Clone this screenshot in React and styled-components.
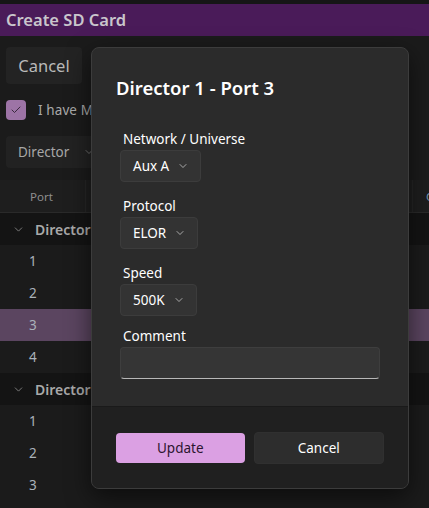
import React from 'react'
import styled, { createGlobalStyle } from 'styled-components'
import { ChevronDown, Check } from 'lucide-react'

const GlobalStyle = createGlobalStyle`
  html, body {
    margin: 0;
    padding: 0;
    background: #1b1b1b;
    font-family: 'Noto Sans', 'Open Sans', sans-serif;
    overflow: hidden;
  }
  * { box-sizing: border-box; }
`

const rows = [
  { type: 'group', label: 'Director 1' },
  { type: 'port', label: '1' },
  { type: 'port', label: '2' },
  { type: 'port', label: '3', selected: true },
  { type: 'port', label: '4' },
  { type: 'group', label: 'Director 2' },
  { type: 'port', label: '1' },
  { type: 'port', label: '2' },
  { type: 'port', label: '3' },
]

const fields = [
  { label: 'Network / Universe', value: 'Aux A' },
  { label: 'Protocol', value: 'ELOR' },
  { label: 'Speed', value: '500K' },
]

const App = () => {
  return (
    <Page>
      <GlobalStyle />
      <TopStrip />
      <TitleBar>Create SD Card</TitleBar>
      <Toolbar>
        <GhostButton>Cancel</GhostButton>
      </Toolbar>
      <CheckRow>
        <CheckBox><Check size={12} strokeWidth={2} /></CheckBox>
        <CheckText>I have Made sure the SD card is inserted and I am using</CheckText>
      </CheckRow>
      <FilterRow>
        <FilterSelect>Director <ChevronDown size={12} strokeWidth={1.5} /></FilterSelect>
      </FilterRow>
      <Table>
        <HeaderRow>
          <HeaderCell width={86}>Port</HeaderCell>
          <HeaderCell width={327} />
          <HeaderCell accent>C</HeaderCell>
        </HeaderRow>
        {rows.map((r, i) =>
          r.type === 'group' ? (
            <GroupRow key={i}>
              <ChevronDown size={13} strokeWidth={1.5} />
              <span>{r.label}</span>
            </GroupRow>
          ) : (
            <PortRow key={i} selected={r.selected}>{r.label}</PortRow>
          )
        )}
      </Table>

      <Dialog>
        <DialogBody>
          <DialogTitle>Director 1 - Port 3</DialogTitle>
          <Form>
            {fields.map((f) => (
              <Field key={f.label}>
                <Label>{f.label}</Label>
                <Select>
                  {f.value}
                  <ChevronDown size={12} strokeWidth={1.5} />
                </Select>
              </Field>
            ))}
            <Field tight>
              <Label>Comment</Label>
              <TextBox />
            </Field>
          </Form>
        </DialogBody>
        <DialogFooter>
          <PrimaryButton>Update</PrimaryButton>
          <SecondaryButton>Cancel</SecondaryButton>
        </DialogFooter>
      </Dialog>
    </Page>
  )
}

const Page = styled.div`
  position: relative;
  width: 429px;
  height: 508px;
  background: #1b1b1b;
  overflow: hidden;
`

const TopStrip = styled.div`
  height: 4px;
  background: #161616;
`

const TitleBar = styled.div`
  height: 32px;
  background: #4a1b59;
  color: #c9c6cc;
  font-size: 16.5px;
  font-weight: 600;
  padding-left: 6px;
  line-height: 32px;
`

const Toolbar = styled.div`
  padding: 11px 6px 0;
`

const GhostButton = styled.div`
  width: 76px;
  height: 37px;
  background: #232323;
  border-radius: 4px;
  color: #b9b9b9;
  font-size: 16.5px;
  display: flex;
  align-items: center;
  justify-content: center;
`

const CheckRow = styled.div`
  display: flex;
  align-items: center;
  gap: 12px;
  padding: 16px 6px 0;
  white-space: nowrap;
`

const CheckBox = styled.div`
  width: 20px;
  height: 20px;
  border-radius: 4px;
  background: #9d74a6;
  color: #3a2a3e;
  display: flex;
  align-items: center;
  justify-content: center;
`

const CheckText = styled.span`
  color: #a9a9a9;
  font-size: 13.5px;
  letter-spacing: 0.1px;
`

const FilterRow = styled.div`
  padding: 16px 6px 0;
`

const FilterSelect = styled.div`
  width: 90px;
  height: 32px;
  background: #222222;
  border-radius: 4px;
  color: #a7a7a7;
  font-size: 13.5px;
  display: flex;
  align-items: center;
  gap: 14px;
  padding-left: 12px;
  svg { color: #8a8a8a; }
`

const Table = styled.div`
  margin-top: 12px;
`

const HeaderRow = styled.div`
  display: flex;
  height: 33px;
  background: #1e1e1e;
  border-bottom: 1px solid #2a2a2a;
`

const HeaderCell = styled.div`
  width: ${(p) => (p.width ? p.width + 'px' : 'auto')};
  flex-shrink: 0;
  border-right: 1px solid #262626;
  padding-left: ${(p) => (p.accent ? '13px' : '30px')};
  color: ${(p) => (p.accent ? '#7a9ab8' : '#8e8e8e')};
  font-size: 11.5px;
  display: flex;
  align-items: center;
`

const GroupRow = styled.div`
  height: 32px;
  background: #141414;
  display: flex;
  align-items: center;
  gap: 10px;
  padding-left: 12px;
  color: #a9a9a9;
  font-size: 14px;
  font-weight: 600;
  svg { color: #909090; }
`

const PortRow = styled.div`
  height: 32px;
  background: ${(p) => (p.selected ? '#5b4560' : '#1b1b1b')};
  color: #aab2ba;
  font-size: 13.5px;
  display: flex;
  align-items: center;
  padding-left: 29px;
`

const Dialog = styled.div`
  position: absolute;
  left: 91px;
  top: 47px;
  width: 318px;
  height: 442px;
  background: #2b2b2b;
  border: 1px solid #3c3c3c;
  border-radius: 8px;
  box-shadow: 0 8px 24px rgba(0, 0, 0, 0.55);
  display: flex;
  flex-direction: column;
  overflow: hidden;
`

const DialogBody = styled.div`
  flex: 1;
  padding: 27px 24px 0;
`

const DialogTitle = styled.div`
  color: #ffffff;
  font-size: 18.5px;
  font-weight: 600;
  line-height: 26px;
`

const Form = styled.div`
  display: flex;
  flex-direction: column;
  gap: 15px;
  padding: 29px 4px 0;
`

const Field = styled.div`
  display: flex;
  flex-direction: column;
  gap: 2px;
  margin-top: ${(p) => (p.tight ? '-4px' : '0')};
`

const Label = styled.div`
  color: #ffffff;
  font-size: 13.5px;
  line-height: 18px;
  padding-left: 3px;
`

const Select = styled.div`
  align-self: flex-start;
  height: 32px;
  background: #333333;
  border: 1px solid #3c3c3c;
  border-radius: 4px;
  color: #ffffff;
  font-size: 13.5px;
  display: flex;
  align-items: center;
  gap: 8px;
  padding: 0 11px 0 12px;
  svg { color: #cfcfcf; }
`

const TextBox = styled.div`
  height: 32px;
  background: #353535;
  border: 1px solid #3e3e3e;
  border-bottom: 1px solid #b8b8b8;
  border-radius: 4px;
`

const DialogFooter = styled.div`
  height: 82px;
  background: #202020;
  border-top: 1px solid #1a1a1a;
  display: flex;
  align-items: center;
  gap: 9px;
  padding: 0 24px;
`

const PrimaryButton = styled.div`
  flex: 1;
  height: 30px;
  border-radius: 4px;
  background: #dba0e3;
  color: #2b1530;
  font-size: 13.5px;
  display: flex;
  align-items: center;
  justify-content: center;
`

const SecondaryButton = styled.div`
  flex: 1;
  height: 32px;
  border-radius: 4px;
  background: #2d2d2d;
  border: 1px solid #303030;
  color: #ffffff;
  font-size: 13.5px;
  display: flex;
  align-items: center;
  justify-content: center;
`

export default App
